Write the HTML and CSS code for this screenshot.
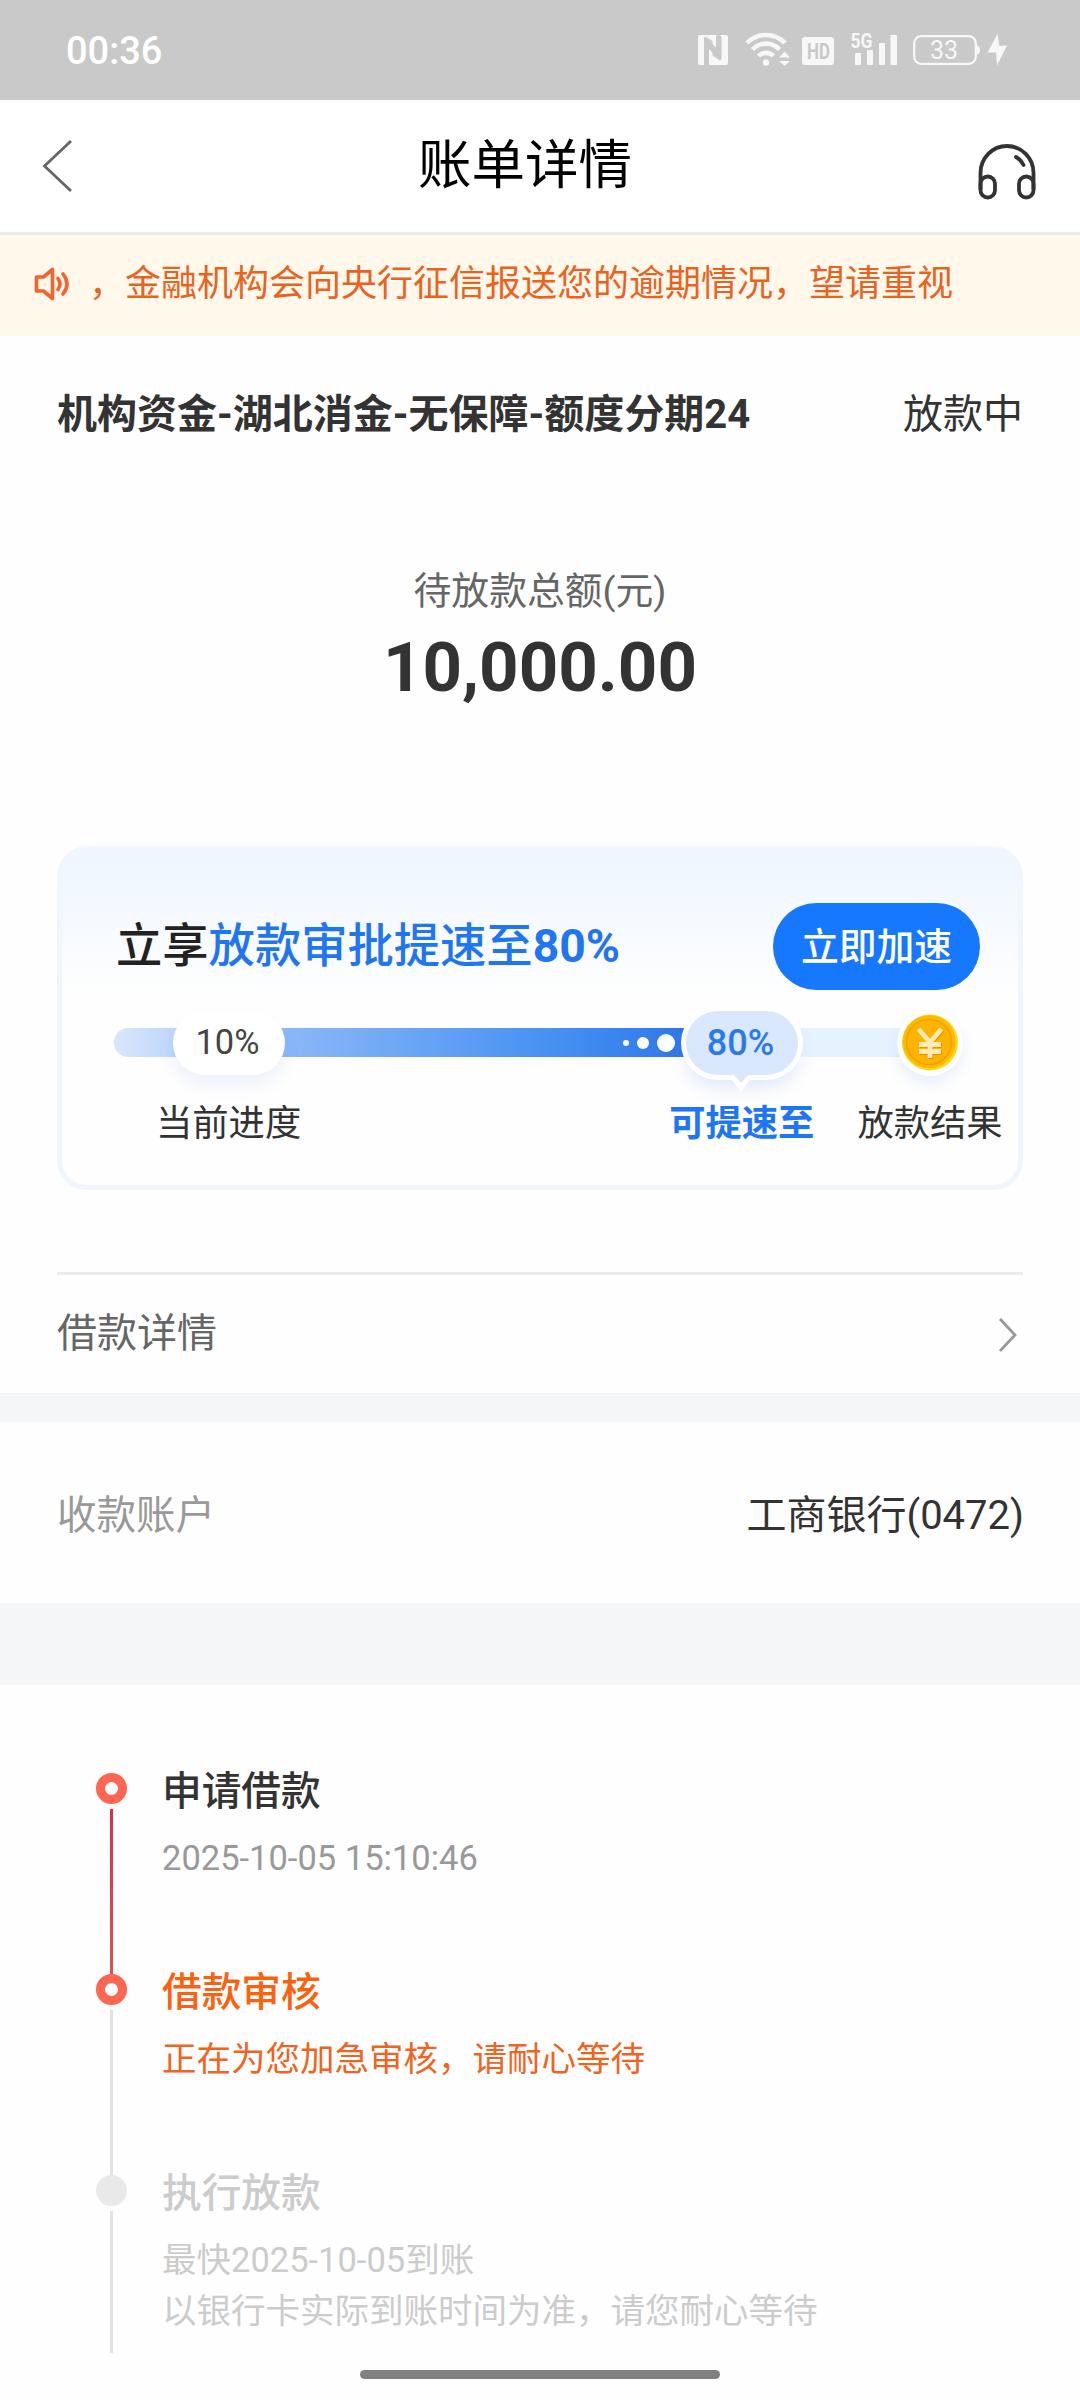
FILE: index.html
```html
<!DOCTYPE html>
<html lang="zh-CN">
<head>
<meta charset="utf-8">
<title>账单详情</title>
<link rel="stylesheet" href="styles.css">
</head>
<body>
<div class="screen">
  <div class="status-bar">
    <span class="clock">00:36</span>
    <svg class="status-icons" width="320" height="50" viewBox="0 -10 320 50">
      <g fill="#f7f7f7">
        <path fill-rule="evenodd" d="M10 5h17l-1 1v11.500l-3.500-3.500v-3L15 6.500 14 8v27H10a2 2 0 0 1-2-2V7a2 2 0 0 1 2-2Z"/>
        <path d="M30 5h6a2 2 0 0 1 2 2v26a2 2 0 0 1-2 2H19V19l3.500 3.500v3l7.500 5 1.500-1.500V7Z"/>
        <circle cx="76" cy="32.500" r="3.200"/>
        <path d="M94.500 21.500l5.500 6h-11ZM94.500 36l5.500-5h-11Z"/>
        <path d="M115 7h26a3 3 0 0 1 3 3v22a3 3 0 0 1-3 3h-26a3 3 0 0 1-3-3V10a3 3 0 0 1 3-3Z"/>
        <rect x="165" y="23" width="6" height="12" rx="1"/>
        <rect x="177" y="20" width="6" height="15" rx="1"/>
        <rect x="189" y="13" width="6" height="22" rx="1"/>
        <rect x="200.500" y="5" width="6.500" height="30" rx="1"/>
        <path d="M287 15.500q3 .5 3 4.500t-3 4.500Z"/>
        <path d="M307.500 4 297.500 22.500h8.500L307 35.500l10-20-7.500.5Z"/>
      </g>
      <g fill="none" stroke="#f7f7f7">
        <path stroke-width="4.600" d="M57 13a26.500 26.500 0 0 1 38 0M62.500 19.500a18.500 18.500 0 0 1 27 0M68.500 26a10.500 10.500 0 0 1 15 0"/>
        <rect x="224.200" y="6.200" width="61.600" height="27.600" rx="7" stroke-width="2.300"/>
      </g>
      <text class="net-type" x="160.500" y="18" textLength="22" lengthAdjust="spacingAndGlyphs">5G</text>
      <text class="hd" x="117" y="29" textLength="23" lengthAdjust="spacingAndGlyphs">HD</text>
      <text class="battery" x="254" y="29" text-anchor="middle">33</text>
    </svg>
  </div>

  <header class="nav">
    <svg width="32" height="54" viewBox="0 0 32 54" fill="none" stroke="#666" stroke-width="2.800"><path d="M30 2 3.500 27 30 52"/></svg>
    <h1>账单详情</h1>
    <svg width="60" height="60" viewBox="0 0 60 60" fill="none" stroke="#333" stroke-width="3.800" stroke-linecap="round">
      <path d="M3.500 47V31a26.500 27 0 0 1 53 0v16"/>
      <rect x="3.500" y="34.500" width="14.500" height="21" rx="7.200"/>
      <rect x="42" y="34.500" width="14.500" height="21" rx="7.200"/>
      <path d="M39 15q5 3 7.500 8"/>
    </svg>
  </header>

  <div class="notice">
    <svg width="37" height="36" viewBox="0 0 37 36" fill="none" stroke="#f4622d" stroke-width="3.600" stroke-linejoin="round">
      <path d="M3.500 11h7L19.500 3.500v29L10.500 25h-7Z"/>
      <path d="M25 12.500q4 5.500 0 11M30 8q8 10 0 20" stroke-linecap="round"/>
    </svg>
    <div class="ticker"><span>，金融机构会向央行征信报送您的逾期情况，望请重视</span></div>
  </div>

  <main>
    <section class="bill">
      <div class="bill-head"><strong>机构资金-湖北消金-无保障-额度分期24</strong><span>放款中</span></div>
      <div class="amount-label">待放款总额(元)</div>
      <div class="amount">10,000.00</div>

      <div class="boost">
        <div class="boost-head">
          <div class="boost-title">立享<em>放款审批提速至<b>80%</b></em></div>
          <button class="boost-btn">立即加速</button>
        </div>
        <div class="track">
          <div class="fill"><i class="dot s"></i><i class="dot m"></i><i class="dot l"></i></div>
          <div class="pill now">10%</div>
          <div class="pill goal"><svg width="24" height="19" viewBox="0 0 24 19"><path fill="#fff" d="M0 3 12 19 24 3Z"/><path fill="#dae8fd" d="M3 0H21L12 10Z"/></svg><span>80%</span></div>
          <svg class="coin" width="66" height="66" viewBox="0 0 66 66">
            <circle cx="33" cy="33" r="33" fill="#fff"/>
            <circle cx="33" cy="32.500" r="28" fill="#fadb14"/>
            <circle cx="32.300" cy="31.700" r="26.500" fill="#fcb900"/>
            <circle cx="32" cy="32" r="22.500" fill="#fdb400" stroke="#f0a000" stroke-width="1.500"/>
            <path d="M21.500 19 33 32.500 44.500 19M33 32v16M22 34.500h22M22 41.500h22" fill="none" stroke="#ea8d00" stroke-width="4.800" transform="translate(.8 1)"/>
            <path d="M21.500 19 33 32.500 44.500 19M33 32v16M22 34.500h22M22 41.500h22" fill="none" stroke="#ffe9b5" stroke-width="4.800"/>
          </svg>
        </div>
        <div class="labels"><span>当前进度</span><b>可提速至</b><span>放款结果</span></div>
      </div>

      <div class="detail-row"><span>借款详情</span>
        <svg width="20" height="36" viewBox="0 0 20 36" fill="none" stroke="#999" stroke-width="2.800"><path d="M2 2 17 18 2 34"/></svg>
      </div>
    </section>

    <section class="account"><span>收款账户</span><b>工商银行(0472)</b></section>

    <section class="steps">
      <div class="step done">
        <div class="rail"><i class="node"></i><i class="line"></i></div>
        <div class="info"><h2>申请借款</h2><p>2025-10-05 15:10:46</p></div>
      </div>
      <div class="step active">
        <div class="rail"><i class="node"></i><i class="line"></i></div>
        <div class="info"><h2>借款审核</h2><p>正在为您加急审核，请耐心等待</p></div>
      </div>
      <div class="step pending">
        <div class="rail"><i class="node"></i><i class="line"></i></div>
        <div class="info"><h2>执行放款</h2><p>最快2025-10-05到账<br>以银行卡实际到账时间为准，请您耐心等待</p></div>
      </div>
    </section>
  </main>
  <div class="home-bar"></div>
</div>
</body>
</html>
```
FILE: styles.css
```css
* { box-sizing: border-box; }
body { margin: 0; background: #fff; }
h1, h2, p { margin: 0; font-weight: 400; }
svg { display: block; flex: none; }

.screen {
  display: flex;
  flex-direction: column;
  width: 1080px;
  height: 2400px;
  overflow: hidden;
  background: #fefefe;
  color: #333;
  font-family: Roboto, "Noto Sans CJK SC", sans-serif;
  white-space: nowrap;
}

.status-bar {
  display: flex;
  justify-content: space-between;
  height: 100px;
  padding: 20px 70px 0 66px;
  background: #c9c9c9;
  color: #fff;
}
.clock { padding-top: 10px; font-size: 38px; font-weight: 500; line-height: 42px; }
.net-type { font-size: 21px; font-weight: 700; fill: #f7f7f7; }
.hd { font-size: 22px; font-weight: 700; fill: #c9c9c9; }
.battery { font-size: 25px; fill: #f7f7f7; }

.nav {
  display: flex;
  align-items: center;
  justify-content: space-between;
  height: 135px;
  padding: 0 43px 1px 41px;
  border-bottom: 3px solid #ede9e7;
  background: #fff;
}
.nav h1 { font-size: 53.500px; line-height: 64px; color: #000; }
.nav svg:last-child { margin-top: 13px; }

.notice {
  display: flex;
  align-items: center;
  gap: 16px;
  height: 101px;
  padding: 0 32px 3px 33px;
  background: #fff8eb;
  color: #ea621f;
}
.ticker { flex: 1; overflow: hidden; padding-left: 3px; font-size: 36px; line-height: 50px; }

.bill { height: 1057px; padding: 0 57px; }
.bill-head {
  display: flex;
  justify-content: space-between;
  padding-top: 49px;
  font-size: 40px;
  line-height: 60px;
}
.bill-head strong { font-weight: 700; }
.amount-label { margin-top: 121px; text-align: center; font-size: 37.800px; line-height: 50px; color: #666; }
.amount { margin-top: 12px; text-align: center; font-size: 69px; font-weight: 700; line-height: 80px; }

.boost {
  height: 344px;
  margin-top: 138px;
  border: 5px solid #eff6fe;
  border-radius: 30px;
  background: linear-gradient(#eef6ff, #f5f9ff 60px, #fefefe 145px);
}
.boost-head { display: flex; justify-content: space-between; padding: 52px 38px 0 54px; }
.boost-title { font-size: 46.300px; font-weight: 500; line-height: 86px; color: #222; }
.boost-title em { font-style: normal; color: #1f76f0; }
.boost-title b { font-weight: 700; }
.boost-btn {
  width: 207px;
  height: 87px;
  padding: 0;
  border: 0;
  border-radius: 44px;
  background: #1677ff;
  color: #fff;
  font: 500 37.800px/84px Roboto, "Noto Sans CJK SC", sans-serif;
}
.track {
  position: relative;
  width: 810px;
  height: 29px;
  margin: 38px 0 0 52px;
  border-radius: 15px;
  background: #e7f2ff;
}
.fill {
  display: flex;
  align-items: center;
  justify-content: flex-end;
  width: 590px;
  height: 29px;
  padding-right: 29px;
  border-radius: 15px 0 0 15px;
  background: linear-gradient(90deg, #d9e7fb, #8ab7f8 30%, #4590f2 75%, #2a75e8);
}
.dot { border-radius: 50%; background: #fff; }
.dot.s { width: 6px; height: 6px; margin-right: 8px; }
.dot.m { width: 12px; height: 12px; margin-right: 8px; }
.dot.l { width: 18px; height: 18px; }
.pill {
  position: absolute;
  top: -17px;
  width: 112px;
  height: 64px;
  border-radius: 32px;
  text-align: center;
  font-size: 34.500px;
  line-height: 63px;
}
.pill.now { left: 59px; padding-right: 3px; background: #fff; color: #444; box-shadow: 0 10px 16px rgba(80, 130, 240, .1); }
.pill.goal {
  left: 572px;
  padding-right: 3px;
  background: #dae8fd;
  color: #2878ee;
  font-size: 36px;
  font-weight: 500;
  line-height: 64px;
  box-shadow: 0 0 0 5px #fff, 0 12px 18px rgba(80, 130, 240, .18);
}
.pill.goal svg { position: absolute; left: 43px; top: 62px; }
.coin { position: absolute; left: 783px; top: -18px; border-radius: 50%; box-shadow: 0 8px 14px rgba(80, 130, 240, .12); }
.labels { display: flex; margin-top: 42px; padding-left: 94px; font-size: 36.300px; line-height: 50px; }
.labels b { margin: 0 43px 0 368px; font-weight: 700; color: #1f76f5; }

.detail-row {
  display: flex;
  align-items: center;
  justify-content: space-between;
  height: 121px;
  margin-top: 82px;
  padding-right: 5px;
  border-top: 3px solid #ebebeb;
  font-size: 40px;
  line-height: 50px;
  color: #666;
}
.detail-row svg { margin-top: 1px; }

.account {
  display: flex;
  align-items: center;
  justify-content: space-between;
  height: 292px;
  padding: 0 56px 2px 57px;
  border-top: 29px solid #f5f6f8;
  border-bottom: 82px solid #f5f6f8;
  font-size: 40px;
}
.account span { font-size: 39.500px; color: #999; }
.account b { font-weight: 400; }

.steps { padding: 76px 0 0 96px; }
.step { display: flex; gap: 35px; height: 201px; }
.rail { display: flex; flex-direction: column; align-items: center; width: 31px; padding-top: 12px; }
.node { flex: none; width: 31px; height: 31px; border: 9px solid #ff6652; border-radius: 50%; background: #fff; }
.line { flex: none; width: 3px; height: 166px; margin-top: 5px; background: #e2e2e2; }
.done .line { background: linear-gradient(#da2c55, #e0524b); }
.pending .node { border-color: #e9e9e9; background: #e9e9e9; }
.pending .line { height: 142px; }
.info h2 { padding-top: 1px; font-size: 39.700px; font-weight: 500; line-height: 60px; }
.info p { margin-top: 11px; font-size: 34.500px; line-height: 51px; color: #999; }
.active h2 { color: #f96310; }
.active p { color: #ee6420; }
.pending h2, .pending p { color: #ccc; }

.home-bar { position: absolute; left: 360px; top: 2370px; width: 360px; height: 9px; border-radius: 5px; background: #808080; }
```
